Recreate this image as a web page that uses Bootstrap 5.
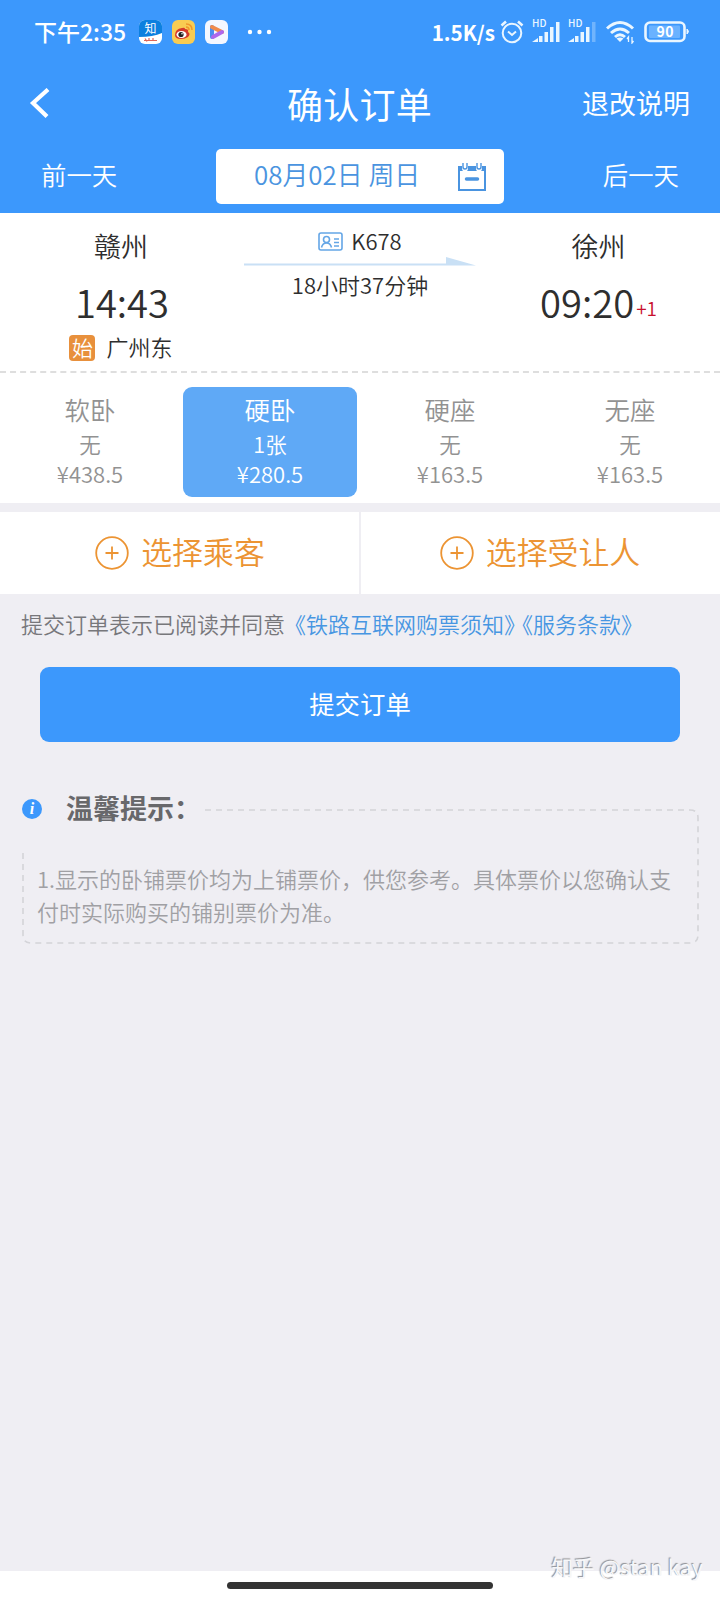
<!DOCTYPE html>
<html lang="zh-CN">
<head>
<meta charset="utf-8">
<meta name="viewport" content="width=device-width, initial-scale=1">
<title>确认订单</title>
<link href="https://cdn.jsdelivr.net/npm/bootstrap@5.3.0/dist/css/bootstrap.min.css" rel="stylesheet">
<style>
body{width:720px;height:1600px;background:#efeef3;color:#2e2e2e;font-family:"Noto Sans CJK SC",sans-serif;font-size:22px;font-weight:350;line-height:30px;overflow:hidden;white-space:nowrap}
svg{display:block;flex:none}
.blue-area{background:#3c98fc;height:213px;color:#fff}
.status-bar{height:64px;padding:0 30px 0 34px;font-size:23px;font-weight:500}
.title-bar{height:78px;padding:0 30px 0 29px;font-size:27px;font-weight:400}
.title-bar .page-title{font-size:36px;line-height:50px;letter-spacing:.3px}
.side{flex:1 1 0}
.date-bar{height:71px;padding:0 41px;font-size:25.4px}
.date-box{width:288px;height:55px;margin-top:-2px;border-radius:5px;color:#4a94e0;padding:0 18px 0 38px;font-size:25.9px}
.trip{height:160px;border-bottom:2px dashed #dedede;padding-top:19px}
.station{width:240px}
.city{font-size:27px;line-height:28px;padding-left:2px}
.clock{font-size:38.2px;line-height:46px;margin-top:19px;padding-left:4px}
.origin{margin-top:7px;line-height:28px;font-size:22px;padding-left:2px}
.origin-tag{width:26px;height:26px;margin-top:3px;border-radius:4px;background:#e8903c;color:#fff;font-size:21px;line-height:24px;text-align:center}
.day-plus{color:#c8102e;font-size:19px;line-height:20px;margin-left:2px;padding-bottom:2px;align-self:flex-end;margin-bottom:5px}
.seats{height:130px;padding:14px 0 6px}
.seat{height:110px;margin:0 3px;border-radius:9px;color:#929292;text-align:center;padding-top:7px}
.seat.chosen{background:#5fa9f6;color:#fff}
.seat-name{font-size:25.4px;line-height:30px}
.seat-left{line-height:30px;margin-top:5px;font-size:21.5px}
.seat-price{line-height:28px;font-size:22px}
.pickers{margin-top:9px;height:82px;color:#ec9433;font-size:30.9px}
.pickers>div+div{box-shadow:-1px 0 #efeef3,inset 1px 0 #efeef3}
.agree{padding:0 0 0 21px;margin-top:14px;color:#77777b}
.agree a{color:#4796e2;text-decoration:none}
.submit-btn{display:block;width:640px;height:75px;margin:29px auto 0;border-radius:9px;background:#3c98fc;color:#fff;font-size:25.4px;border:0;padding:0 0 3px}
.tips{margin:47px 21px 0 22px;color:#a0a0a4}
.tips-title{height:40px;font-size:27px;font-weight:700;color:#68686b}
.tips-body{position:relative;height:114px;padding:33px 0 0 15px;line-height:33px}
.tips-frame{position:absolute;left:0;top:-20px}
.home-area{position:absolute;left:0;right:0;bottom:0;height:29px;background:#fff;padding-top:11px}
.home-pill{width:266px;height:7px;border-radius:4px;background:#333;margin:0 auto}
.watermark{position:absolute;right:17px;bottom:18px;font-size:21.7px;font-weight:400;line-height:30px;color:#f7f7f9;text-shadow:-1px -1px 1px #8f8f92}
</style>
</head>
<body>
<header class="blue-area">
  <div class="status-bar d-flex align-items-center">
    <span style="width:105px;margin-top:-2px">下午2:35</span>
    <svg width="23" height="24" viewBox="0 0 23 24"><rect width="23" height="24" rx="6" fill="#fff"/><path d="M0 17V6a6 6 0 0 1 6-6h11a6 6 0 0 1 6 6v7Q14 17 0 17z" fill="#0c80df"/><text x="11.500" y="13" font-size="12" font-weight="400" text-anchor="middle" fill="#fff">知</text><path d="M5 20.500h13M6 18.500l2 3M10 18v3M14 18v3" stroke="#df6658" stroke-width="1.200"/></svg>
    <svg style="margin-left:10px" width="23" height="24" viewBox="0 0 23 24"><rect width="23" height="24" rx="6" fill="#f9cc52"/><path d="M3 15q0-6 7-7 3-1 3 1 4 0 3 3 3 2 0 5-3 2-7 2-6 0-6-4z" fill="#d43a2b"/><ellipse cx="9.500" cy="14.500" rx="5" ry="3.600" fill="#fff"/><circle cx="9" cy="14.500" r="2.600" fill="#222"/><circle cx="10" cy="13.700" r=".8" fill="#fff"/><path d="M14 4q6 0 6 6M14 7q3 0 3 3" fill="none" stroke="#f0952a" stroke-width="1.500"/></svg>
    <svg style="margin-left:10px" width="23" height="24" viewBox="0 0 23 24"><rect width="23" height="24" rx="6" fill="#f4f7ff"/><path d="M7 7v10" stroke="#4b8ef0" stroke-width="4" stroke-linecap="round"/><path d="M7 7l10 5" stroke="#f08a4c" stroke-width="4" stroke-linecap="round"/><path d="M8 17l9-5" stroke="#ae67ec" stroke-width="4" stroke-linecap="round"/></svg>
    <svg style="margin-left:19px" width="26" height="6" viewBox="0 0 26 6" fill="#fff"><circle cx="3" cy="3" r="2.200"/><circle cx="12.500" cy="3" r="2.200"/><circle cx="22" cy="3" r="2.200"/></svg>
    <span class="ms-auto" style="font-size:20.600px;font-weight:700">1.5K/s</span>
    <svg style="margin-left:5px" width="24" height="24" viewBox="0 0 24 24" fill="none" stroke="#e9f5ff" stroke-width="2"><circle cx="12" cy="13" r="9.300"/><path d="M8 11.500l4 3.500 4-3.500"/><path d="M1.500 5.500l4.500-4M22.500 5.500l-4.500-4" stroke-width="2.600"/></svg>
    <svg style="margin-left:8px;margin-top:-6px" width="28" height="30" viewBox="0 -6 28 30" fill="#eaf6ff"><text x="0" y="7" font-size="10" font-weight="500">HD</text><path d="M0 22l6-4v4zM7 16h3.500v6H7zM12.500 12h3.500v10h-3.500zM18 7h3.500v15H18zM24 2h3.500v20H24z"/></svg>
    <svg style="margin-left:8px;margin-top:-6px" width="28" height="30" viewBox="0 -6 28 30" fill="#eaf6ff"><text x="0" y="7" font-size="10" font-weight="500">HD</text><path d="M0 22l6-4v4zM7 16h3.500v6H7zM12.500 12h3.500v10h-3.500zM18 7h3.500v15H18z"/><path d="M24 2h3.500v20H24z" opacity=".3"/></svg>
    <svg style="margin-left:10px" width="29" height="24" viewBox="0 0 29 24" fill="none" stroke="#eaf6ff" stroke-width="3"><path d="M1 8.500q13-12 26 0M5 13q9-8 18 0M9 17q5-4.500 10 0"/><path d="M10.500 18.500q3.500-2 7 0L14 22z" fill="#eaf6ff" stroke="none"/><path d="M22.500 22v-5l-1.500 2M26 17v6l1.500-2" stroke-width="1.300"/></svg>
    <svg style="margin-left:9px" width="46" height="22" viewBox="0 0 46 22"><rect x="1.500" y="1.500" width="39" height="18.500" rx="4.500" fill="none" stroke="#eaf6ff" stroke-width="2.600"/><rect x="5" y="4.500" width="31" height="12.500" rx="1" fill="#6ab2ff"/><path d="M43 8q3 2.500 0 5z" fill="#eaf6ff" stroke="#eaf6ff"/><text x="21" y="15.800" font-size="14" font-weight="700" text-anchor="middle" fill="#fff" textLength="17">90</text></svg>
  </div>
  <div class="title-bar d-flex align-items-center">
    <div class="side"><svg width="21" height="30" viewBox="0 0 21 30" fill="none" stroke="#fff" stroke-width="4.200"><path d="M19 1.500L4 15l14 13.500"/></svg></div>
    <div class="page-title">确认订单</div>
    <div class="side text-end">退改说明</div>
  </div>
  <div class="date-bar d-flex align-items-center justify-content-between">
    <span style="margin-top:-8px">前一天</span>
    <div class="date-box bg-white d-flex align-items-center justify-content-between">
      <span style="margin-top:-5px">08月02日 周日</span>
      <svg width="28" height="29" viewBox="0 0 28 29" fill="none" stroke="#4a94e0"><rect x="1" y="5" width="26" height="23" stroke-width="2"/><path d="M1 4h26v5H1z" fill="#4a94e0" stroke="none"/><path d="M7 1.500v5M21 1.500v5" stroke="#fff" stroke-width="6" stroke-linecap="round"/><path d="M5 1v4a2 2 0 0 0 4 0V1M19 1v4a2 2 0 0 0 4 0V1" stroke-width="1.400"/><path d="M8.500 17h11" stroke-width="3.500" stroke-linecap="round"/></svg>
    </div>
    <span style="margin-top:-8px">后一天</span>
  </div>
</header>
<main>
  <section class="trip bg-white d-flex">
    <div class="station text-center">
      <div class="city">赣州</div>
      <div class="clock">14:43</div>
      <div class="origin d-flex align-items-center justify-content-center"><span class="origin-tag">始</span><span style="margin:-1px 0 0 11px">广州东</span></div>
    </div>
    <div class="station d-flex flex-column align-items-center">
      <div class="d-flex align-items-center" style="height:20px;margin-top:-1px">
        <svg width="25" height="19" viewBox="0 0 25 19" fill="none" stroke="#64a6e6" stroke-width="1.600"><rect x="1" y="1" width="23" height="17" rx="2"/><circle cx="8.500" cy="7.500" r="3"/><path d="M3.500 15.500q1-4.500 5-4.500t5 4.500M16 7h5M16 10.500h5M16 14h5"/></svg>
        <span style="margin:-2px 0 0 8px">K678</span>
      </div>
      <svg style="margin-top:6px" width="232" height="9" viewBox="0 0 232 9" fill="#c9e0f5"><path d="M0 6.500h202V0l30 8.500H0z"/></svg>
      <div style="margin-top:3px">18小时37分钟</div>
    </div>
    <div class="station text-center">
      <div class="city" style="padding:0 3px 0 0">徐州</div>
      <div class="clock d-flex justify-content-center" style="padding:0 3px 0 0"><span>09:20</span><span class="day-plus">+1</span></div>
    </div>
  </section>
  <section class="seats bg-white row g-0">
    <div class="col-3"><div class="seat"><div class="seat-name">软卧</div><div class="seat-left">无</div><div class="seat-price">¥438.5</div></div></div>
    <div class="col-3"><div class="seat chosen"><div class="seat-name">硬卧</div><div class="seat-left">1张</div><div class="seat-price">¥280.5</div></div></div>
    <div class="col-3"><div class="seat"><div class="seat-name">硬座</div><div class="seat-left">无</div><div class="seat-price">¥163.5</div></div></div>
    <div class="col-3"><div class="seat"><div class="seat-name">无座</div><div class="seat-left">无</div><div class="seat-price">¥163.5</div></div></div>
  </section>
  <section class="pickers bg-white row g-0">
    <div class="col-6 d-flex align-items-center justify-content-center"><svg width="34" height="34" viewBox="0 0 34 34" fill="none" stroke="#ec9433" stroke-width="1.800"><circle cx="17" cy="17" r="15.800"/><path d="M10.500 17h13M17 10.500v13"/></svg><span style="margin:-4px 0 0 12px">选择乘客</span></div>
    <div class="col-6 d-flex align-items-center justify-content-center"><svg width="34" height="34" viewBox="0 0 34 34" fill="none" stroke="#ec9433" stroke-width="1.800"><circle cx="17" cy="17" r="15.800"/><path d="M10.500 17h13M17 10.500v13"/></svg><span style="margin:-4px 0 0 12px">选择受让人</span></div>
  </section>
  <p class="agree mb-0">提交订单表示已阅读并同意<a href="#" style="margin-left:-1px">《铁路互联网购票须知》</a><a href="#" style="margin-left:-4px">《服务条款》</a></p>
  <button class="submit-btn" type="button">提交订单</button>
  <section class="tips">
    <div class="tips-title d-flex align-items-center"><svg width="20" height="20" viewBox="0 0 20 20"><circle cx="10" cy="10" r="10" fill="#3c98fc"/><text x="10" y="15" text-anchor="middle" fill="#fff" font-family="Liberation Serif" font-size="16" font-style="italic" font-weight="700">i</text></svg><span style="margin:-3px 0 0 24px">温馨提示：</span></div>
    <div class="tips-body">
      <svg class="tips-frame" width="677" height="136" viewBox="0 0 677 136" fill="none" stroke="#d4d4d8" stroke-width="1.600" stroke-dasharray="6 5"><path d="M183 1h485q8 0 8 8v117q0 8-8 8H9q-8 0-8-8V41"/></svg>
      1.显示的卧铺票价均为上铺票价，供您参考。具体票价以您确认支<br>付时实际购买的铺别票价为准。
    </div>
  </section>
</main>
<footer class="home-area"><div class="home-pill"></div></footer>
<div class="watermark">知乎 @stan kay</div>
<script src="https://cdn.jsdelivr.net/npm/bootstrap@5.3.0/dist/js/bootstrap.bundle.min.js"></script>
</body>
</html>
